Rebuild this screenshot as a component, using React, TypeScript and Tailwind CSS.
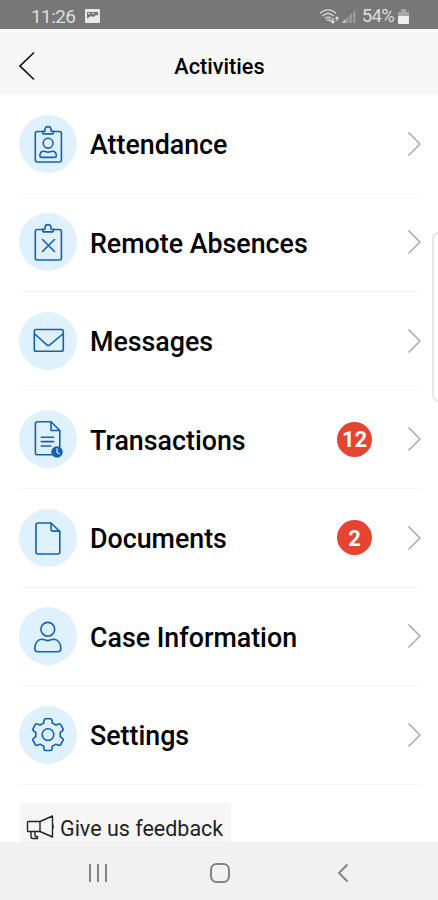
import type { ReactNode } from 'react';

type Item = {
  title: string;
  icon: ReactNode;
  count?: number;
};

function Clipboard() {
  return (
    <>
      <path d="M24 16.500H18.300a2 2 0 0 0-2 2v26.500a2 2 0 0 0 2 2H40.400a2 2 0 0 0 2-2V18.500a2 2 0 0 0-2-2H34.600" />
      <path d="M23.700 16.200H26v-1.600a3 3 0 0 1 6 0v1.600h2.400v1.700a1 1 0 0 1-1 1h-8.700a1 1 0 0 1-1-1z" />
    </>
  );
}

function AttendanceIcon() {
  return (
    <>
      <Clipboard />
      <circle cx="29.100" cy="28.200" r="4.900" />
      <path d="M20.900 40.700c0-2.600 1.700-4.400 4.100-4.400 1.500 0 2.200.8 4.100.8s2.600-.8 4.100-.8c2.400 0 4.100 1.800 4.100 4.400 0 1-.6 1.700-1.600 1.700H22.500c-1 0-1.600-.7-1.600-1.700z" />
    </>
  );
}

function AbsenceIcon() {
  return (
    <>
      <Clipboard />
      <path d="M23.500 26.500l12 12M35.500 26.500l-12 12" />
    </>
  );
}

function MailIcon() {
  return (
    <>
      <rect x="15.300" y="17.500" width="29" height="21.800" rx="1.800" />
      <path d="M15.800 22l12 10.800a2.200 2.200 0 0 0 3 0L43.800 22" />
    </>
  );
}

function TransactionIcon() {
  return (
    <>
      <path d="M32 11.700H18.400a2 2 0 0 0-2 2v29a2 2 0 0 0 2 2H33M40.800 37V20.500L32 11.700v8.800h8.500" />
      <path d="M22.300 27.300h12.200M22.300 31.600h12.200M22.300 36h9.500" />
      <circle cx="38" cy="42" r="5" fill="#1262b3" />
      <path d="M38 38.600v3.600l2.200 1.600" stroke="#dff1fd" strokeWidth="1.200" />
    </>
  );
}

function DocumentIcon() {
  return (
    <>
      <path d="M32 14H19a2 2 0 0 0-2 2v27a2 2 0 0 0 2 2h19.800a2 2 0 0 0 2-2V22.500z" />
      <path d="M32 14v6.500a1.600 1.600 0 0 0 1.600 1.600h7" />
    </>
  );
}

function PersonIcon() {
  return (
    <>
      <circle cx="28.800" cy="22.300" r="6.900" />
      <path d="M15.800 41.500c0-5.400 3-9.200 7.200-9.200 2 0 3 1.300 5.800 1.300s3.800-1.300 5.800-1.300c4.200 0 7.200 3.800 7.200 9.200 0 2-1.100 3.300-3 3.300h-20c-1.900 0-3-1.300-3-3.300z" />
    </>
  );
}

// Each tooth is a pair of outer corners between two pairs of valley corners
function gearPath() {
  const corners = [
    [-20, 12.4],
    [-16, 14.8],
    [-11, 16.2],
    [11, 16.2],
    [16, 14.8],
    [20, 12.4],
  ];
  const points: string[] = [];
  for (let tooth = 0; tooth < 6; tooth++) {
    corners.forEach(([offset, radius]) => {
      const angle = ((tooth * 60 + offset - 90) * Math.PI) / 180;
      points.push(`${(29 + radius * Math.cos(angle)).toFixed(2)} ${(28.6 + radius * Math.sin(angle)).toFixed(2)}`);
    });
  }
  return `M${points.join('L')}Z`;
}

function GearIcon() {
  return (
    <>
      <path d={gearPath()} />
      <circle cx="29" cy="28.600" r="5.800" />
    </>
  );
}

const items: Item[] = [
  { title: 'Attendance', icon: <AttendanceIcon /> },
  { title: 'Remote Absences', icon: <AbsenceIcon /> },
  { title: 'Messages', icon: <MailIcon /> },
  { title: 'Transactions', icon: <TransactionIcon />, count: 12 },
  { title: 'Documents', icon: <DocumentIcon />, count: 2 },
  { title: 'Case Information', icon: <PersonIcon /> },
  { title: 'Settings', icon: <GearIcon /> },
];

function StatusBar() {
  return (
    <div className="flex h-[29px] shrink-0 items-center bg-[#777777] pt-[3px] pr-[29px] pl-[31px] text-[#dedede]">
      <span className="w-[45px] text-[19px] leading-none tracking-[-0.6px]">11:26</span>
      <svg className="ml-[9px]" width="15" height="14" viewBox="0 0 15 14">
        <rect width="15" height="14" rx="1" fill="#e8e8e8" />
        <path d="M2 9.500V3h11v3.500l-2-.5-2.500 2L6 7z" fill="#777777" />
        <path d="M3 4.500h2M7 4.500h2" stroke="#e8e8e8" />
      </svg>
      <svg className="ml-auto" width="38" height="18" viewBox="0 0 38 18" fill="none">
        <path d="M1 6.500c4.500-4.600 11.500-4.600 16 0M3.500 9c3.200-3.200 7.800-3.200 11 0M6 11.500c1.700-1.700 4.300-1.700 6 0" stroke="#cfcfcf" strokeWidth="1.500" />
        <path d="M7.500 13h3.500L14 16" stroke="#cfcfcf" strokeWidth="1.500" />
        <path d="M14 11v5M12.300 14.200L14 16l1.700-1.800M18 14v-4M16.500 11.500l1.500-1.500 1.500 1.500" stroke="#dedede" strokeWidth="1.200" />
        <path d="M23 16h3v-3.500l-3 3zM27 16h2.500V9L27 11.500zM30.500 16H33V6l-2.500 2.500zM34 16h2.500V3L34 5.500z" fill="#999999" />
        <path d="M23 16h3.500v-4z" fill="#cfcfcf" />
      </svg>
      <span className="ml-[5px] text-[18.500px] leading-none tracking-[-0.700px]">54%</span>
      <svg className="ml-[4px]" width="11" height="15" viewBox="0 0 11 15">
        <path d="M0 3h3V0h5v3h3v4H0z" fill="#a8a8a8" />
        <path d="M0 7h11v7a1 1 0 0 1-1 1H1a1 1 0 0 1-1-1z" fill="#eeeeee" />
      </svg>
    </div>
  );
}

function Header() {
  return (
    <header className="grid h-[66px] shrink-0 grid-cols-[80px_1fr_80px] items-center border-t-2 border-white bg-[#f7f7f7] pt-[6px]">
      <svg className="ml-[18px]" width="18" height="30" viewBox="0 0 18 30" fill="none" stroke="#111111" strokeWidth="1.700">
        <path d="M16 1.500L2 15l14 13.500" />
      </svg>
      <h1 className="pt-px pl-px text-center text-[21.700px] leading-none font-medium text-black">Activities</h1>
    </header>
  );
}

function Row({ title, icon, count }: Item) {
  return (
    <li className="flex h-[98.500px] items-center border-b border-[#f7f7f7]">
      <div className="size-[58px] shrink-0 rounded-full bg-[#dff1fd]">
        <svg width="58" height="58" viewBox="0 0 58 58" fill="none" stroke="#1262b3" strokeWidth="1.600" strokeLinecap="round" strokeLinejoin="round">
          {icon}
        </svg>
      </div>
      <span className="ml-[13px] pt-[4px] text-[26.800px] leading-none font-medium text-black">{title}</span>
      <div className="ml-auto flex items-center">
        {count && (
          <span className="mr-[35px] flex size-[35px] items-center justify-center rounded-full bg-[#e54431] pt-[2px] text-[22px] leading-none font-bold text-white">
            {count}
          </span>
        )}
        <svg width="14" height="26" viewBox="0 0 14 26" fill="none" stroke="#a9a9a9" strokeWidth="1.500">
          <path d="M1.500 1.500L13 13 1.500 24.500" />
        </svg>
      </div>
    </li>
  );
}

function NavBar() {
  return (
    <nav className="flex h-[58px] shrink-0 items-center bg-[#f1f1f1] pt-[3px] pl-[88px]">
      <svg width="20" height="20" viewBox="0 0 20 20" stroke="#858585" strokeWidth="2">
        <path d="M2 1v18M10 1v18M18 1v18" />
      </svg>
      <svg className="ml-[102px]" width="20" height="20" viewBox="0 0 20 20" fill="none" stroke="#858585" strokeWidth="2">
        <rect x="1" y="1" width="18" height="18" rx="5.500" />
      </svg>
      <svg className="ml-[107px]" width="12" height="20" viewBox="0 0 12 20" fill="none" stroke="#858585" strokeWidth="2">
        <path d="M10.500 1.500L2 10l8.500 8.500" />
      </svg>
    </nav>
  );
}

function App() {
  return (
    <div className="relative flex h-[900px] w-[438px] flex-col overflow-hidden bg-white font-['Roboto',sans-serif]">
      <StatusBar />
      <Header />
      <main className="min-h-0 flex-1 overflow-hidden pr-[17px] pl-[19px]">
        <ul>
          {items.map((item) => (
            <Row key={item.title} {...item} />
          ))}
        </ul>
        <button className="mt-[18.500px] ml-px flex h-[50px] w-[211px] items-center bg-[#f6f6f6] pl-[6px] text-[#222222]">
          <svg width="30" height="26" viewBox="0 0 30 26" fill="none" stroke="#222222" strokeWidth="1.400" strokeLinejoin="round">
            <path d="M2.500 6.500h11.500v10H2.500a1 1 0 0 1-1-1v-8a1 1 0 0 1 1-1zM14 6.500L26.500 1v21L14 16.500M27 9.500v4" />
            <path d="M5 16.500v5a2 2 0 0 0 2 2h4.500v-2H10a1 1 0 0 1-1-1v-4" />
          </svg>
          <span className="ml-[4px] pt-px text-[21.500px] leading-none whitespace-nowrap">Give us feedback</span>
        </button>
      </main>
      <NavBar />
      {/* edge panel handle, partly off screen */}
      <div className="absolute top-[232px] -right-[8px] h-[170px] w-[14px] rounded-lg border-2 border-[#e6e6e6] bg-white" />
    </div>
  );
}

export default App;
